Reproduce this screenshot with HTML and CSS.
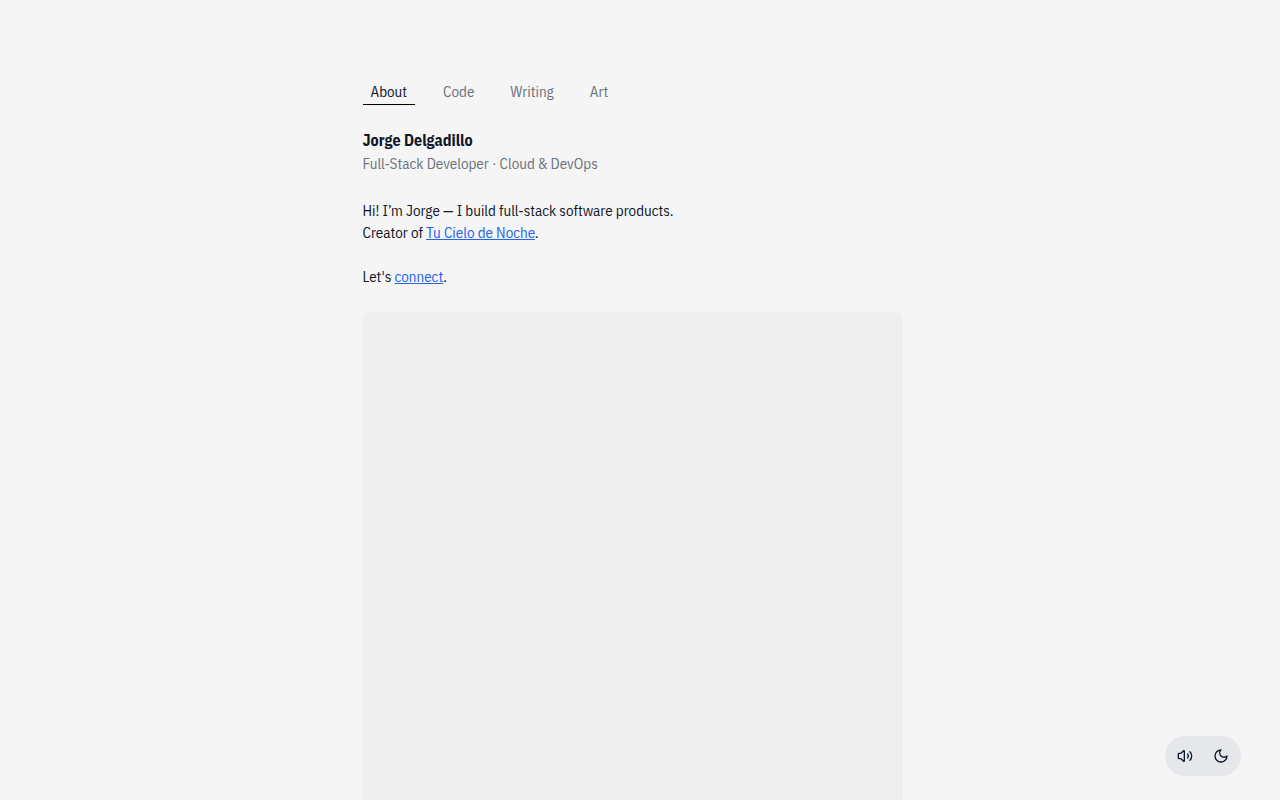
FILE: index.html
```html
<!DOCTYPE html>
<html lang="en">
	<head>
		<meta charset="UTF-8">
		<meta name="viewport" content="width=device-width, initial-scale=1">
		<title>Jorge Delgadillo</title>
		<link rel="stylesheet" href="styles.css">
	</head>
	<body>
		<div class="page">
			<nav class="tabs">
				<a class="tab active" href="#about">About</a>
				<a class="tab" href="#code">Code</a>
				<a class="tab" href="#writing">Writing</a>
				<a class="tab" href="#art">Art</a>
			</nav>
			<main>
				<header class="intro">
					<h1 class="name">Jorge Delgadillo</h1>
					<p class="role">Full-Stack Developer · Cloud &amp; DevOps</p>
				</header>
				<div class="bio">
					<p>Hi! I’m Jorge — I build full-stack software products.<br>Creator of <a href="#tucielo">Tu Cielo de Noche</a>.</p>
					<p>Let's <a href="#connect">connect</a>.</p>
				</div>
				<div class="photo"></div>
			</main>
		</div>

		<div class="controls">
			<button class="control-btn" type="button" aria-label="Toggle sound">
				<svg viewBox="0 0 24 24" aria-hidden="true">
					<path d="M11 4.7a.7.7 0 0 0-1.2-.5L6.4 7.6A1.4 1.4 0 0 1 5.4 8H3a1 1 0 0 0-1 1v6a1 1 0 0 0 1 1h2.4a1.4 1.4 0 0 1 1 .4l3.4 3.4a.7.7 0 0 0 1.2-.5z"/>
					<path d="M16 9a5 5 0 0 1 0 6"/>
					<path d="M19.4 18.4a9 9 0 0 0 0-12.8"/>
				</svg>
			</button>
			<button class="control-btn" type="button" aria-label="Toggle dark mode">
				<svg viewBox="0 0 24 24" aria-hidden="true">
					<path d="M12 3a6 6 0 0 0 9 9 9 9 0 1 1-9-9z"/>
				</svg>
			</button>
		</div>
	</body>
</html>
```
FILE: styles.css
```css
:root {
	--gutter: 15px;
}

* {
	box-sizing: border-box;
	margin: 0;
	padding: 0;
}

body {
	padding-right: var(--gutter);
	background: #f5f5f5;
	color: #0f172a;
	font-family: "IBM Plex Sans Condensed", "Liberation Sans Narrow", "Roboto Condensed", Roboto, sans-serif;
	font-size: 15px;
	line-height: 24px;
}

.page {
	max-width: 588px;
	margin: 0 auto;
	padding: 80px 24px;
}

.tabs {
	display: flex;
	gap: 20px;
	margin-bottom: 23px;
}

.tab {
	padding: 0 8px;
	border-bottom: 1px solid transparent;
	color: #6b7280;
	text-decoration: none;
}

.tab.active {
	border-color: #000;
	color: #0f172a;
}

.name {
	font-size: 16px;
	font-weight: 700;
}

.role {
	color: #6b7280;
}

.bio {
	margin: 24px 0;
	line-height: 22px;
}

.bio p + p {
	margin-top: 22px;
}

.bio a {
	color: #2563eb;
}

.photo {
	aspect-ratio: 3 / 4;
	border-radius: 8px;
	background: #eee;
}

.controls {
	position: fixed;
	right: calc(24px + var(--gutter));
	bottom: 24px;
	display: flex;
	gap: 4px;
	padding: 4px;
	border-radius: 20px;
	background: #e5e7eb;
}

.control-btn {
	display: flex;
	align-items: center;
	justify-content: center;
	width: 32px;
	height: 32px;
	border: none;
	background: none;
	color: #0f172a;
	cursor: pointer;
}

.control-btn svg {
	width: 16px;
	height: 16px;
	fill: none;
	stroke: currentColor;
	stroke-width: 2;
	stroke-linecap: round;
	stroke-linejoin: round;
}
```
